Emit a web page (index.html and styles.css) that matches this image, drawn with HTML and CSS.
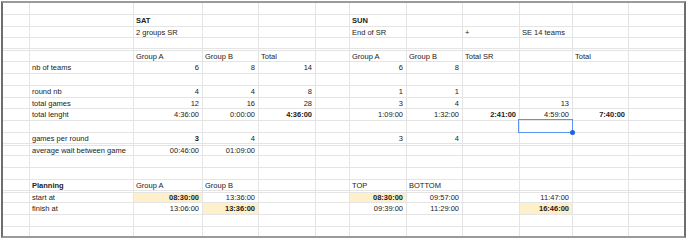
FILE: index.html
```html
<!DOCTYPE html>
<html>
<head>
<meta charset="utf-8">
<link rel="stylesheet" href="styles.css">
</head>
<body>
<div class="frame">
  <div class="r h12"><span></span><span></span><span></span><span></span><span></span><span></span><span></span><span></span><span></span><span></span><span></span><span></span></div>
  <div class="r h12"><span></span><span></span><span class="b">SAT</span><span></span><span></span><span></span><span class="b">SUN</span><span></span><span></span><span></span><span></span><span></span></div>
  <div class="r h11"><span></span><span></span><span>2 groups SR</span><span></span><span></span><span></span><span>End of SR</span><span></span><span>+</span><span>SE 14 teams</span><span></span><span></span></div>
  <div class="r h11"><span></span><span></span><span></span><span></span><span></span><span></span><span></span><span></span><span></span><span></span><span></span><span></span></div>
  <div class="r h2"><span></span><span></span><span></span><span></span><span></span><span></span><span></span><span></span><span></span><span></span><span></span><span></span></div>
  <div class="r h11"><span></span><span></span><span>Group A</span><span>Group B</span><span>Total</span><span></span><span>Group A</span><span>Group B</span><span>Total SR</span><span></span><span>Total</span><span></span></div>
  <div class="r h12"><span></span><span>nb of teams</span><span class="n">6</span><span class="n">8</span><span class="n">14</span><span></span><span class="n">6</span><span class="n">8</span><span></span><span></span><span></span><span></span></div>
  <div class="r h12"><span></span><span></span><span></span><span></span><span></span><span></span><span></span><span></span><span></span><span></span><span></span><span></span></div>
  <div class="r h12"><span></span><span>round nb</span><span class="n">4</span><span class="n">4</span><span class="n">8</span><span></span><span class="n">1</span><span class="n">1</span><span></span><span></span><span></span><span></span></div>
  <div class="r h11"><span></span><span>total games</span><span class="n">12</span><span class="n">16</span><span class="n">28</span><span></span><span class="n">3</span><span class="n">4</span><span></span><span class="n">13</span><span></span><span></span></div>
  <div class="r h12"><span></span><span>total lenght</span><span class="n">4:36:00</span><span class="n">0:00:00</span><span class="n b">4:36:00</span><span></span><span class="n">1:09:00</span><span class="n">1:32:00</span><span class="n b">2:41:00</span><span class="n">4:59:00</span><span class="n b">7:40:00</span><span></span></div>
  <div class="r h12"><span></span><span></span><span></span><span></span><span></span><span></span><span></span><span></span><span></span><span class="sel"></span><span></span><span></span></div>
  <div class="r h11"><span></span><span>games per round</span><span class="n b">3</span><span class="n">4</span><span></span><span></span><span class="n">3</span><span class="n">4</span><span></span><span></span><span></span><span></span></div>
  <div class="r h2"><span></span><span></span><span></span><span></span><span></span><span></span><span></span><span></span><span></span><span></span><span></span><span></span></div>
  <div class="r h10"><span></span><span>average wait between game</span><span class="n">00:46:00</span><span class="n">01:09:00</span><span></span><span></span><span></span><span></span><span></span><span></span><span></span><span></span></div>
  <div class="r h12"><span></span><span></span><span></span><span></span><span></span><span></span><span></span><span></span><span></span><span></span><span></span><span></span></div>
  <div class="r h12"><span></span><span></span><span></span><span></span><span></span><span></span><span></span><span></span><span></span><span></span><span></span><span></span></div>
  <div class="r h11"><span></span><span class="b">Planning</span><span>Group A</span><span>Group B</span><span></span><span></span><span>TOP</span><span>BOTTOM</span><span></span><span></span><span></span><span></span></div>
  <div class="r h2"><span></span><span></span><span></span><span></span><span></span><span></span><span></span><span></span><span></span><span></span><span></span><span></span></div>
  <div class="r h10"><span></span><span>start at</span><span class="n b y">08:30:00</span><span class="n">13:36:00</span><span></span><span></span><span class="n b y">08:30:00</span><span class="n">09:57:00</span><span></span><span class="n">11:47:00</span><span></span><span></span></div>
  <div class="r h12"><span></span><span>finish at</span><span class="n">13:06:00</span><span class="n b y">13:36:00</span><span></span><span></span><span class="n">09:39:00</span><span class="n">11:29:00</span><span></span><span class="n b y">16:46:00</span><span></span><span></span></div>
  <div class="r h12"><span></span><span></span><span></span><span></span><span></span><span></span><span></span><span></span><span></span><span></span><span></span><span></span></div>
  <div class="r h9 last"><span></span><span></span><span></span><span></span><span></span><span></span><span></span><span></span><span></span><span></span><span></span><span></span></div>
</div>
</body>
</html>
```

FILE: styles.css
```css
html, body {
  margin: 0;
  padding: 0;
  background: #ffffff;
}

body {
  width: 690px;
  height: 240px;
  overflow: hidden;
  font-family: "Liberation Sans", Arial, sans-serif;
  font-size: 7.5px;
  color: #222222;
}

.frame {
  margin: 1px 0 0 1px;
  width: 681px;
  height: 233px;
  border-top: 2px solid #9a9a9a;
  border-bottom: 2px solid #9a9a9a;
  border-left: 2px solid #6e6e6e;
  border-right: 2px solid #6e6e6e;
  overflow: hidden;
}

.r {
  display: grid;
  grid-template-columns: 27px 104px 69px 56px 57px 34px 57px 56px 57px 53px 56px 55px;
}

.h12 { height: 12px; }
.h11 { height: 11px; }
.h10 { height: 10px; }
.h9 { height: 9px; }
.h2 { height: 2px; }

.r > span {
  box-sizing: border-box;
  display: flex;
  align-items: center;
  padding: 1px 2px 0 2px;
  border-right: 1px solid #e4e4e4;
  border-bottom: 1px solid #e4e4e4;
  white-space: nowrap;
  overflow: visible;
  line-height: 1;
}

.r > span:last-child {
  border-right: none;
}

.r.last > span {
  border-bottom: none;
}

.r > span.n {
  justify-content: flex-end;
  padding-right: 3px;
}

.r > span.b {
  font-weight: bold;
}

.r > span.y {
  background: #fdf0ca;
}

.r > span.sel {
  position: relative;
}

.r > span.sel::after {
  content: "";
  position: absolute;
  left: -2px;
  top: -2px;
  right: -1px;
  bottom: -1px;
  border: 1.5px solid #5b93ee;
}

.r > span.sel::before {
  content: "";
  position: absolute;
  right: -3px;
  bottom: -3px;
  width: 5px;
  height: 5px;
  border-radius: 50%;
  background: #1a66db;
  z-index: 2;
}
```
